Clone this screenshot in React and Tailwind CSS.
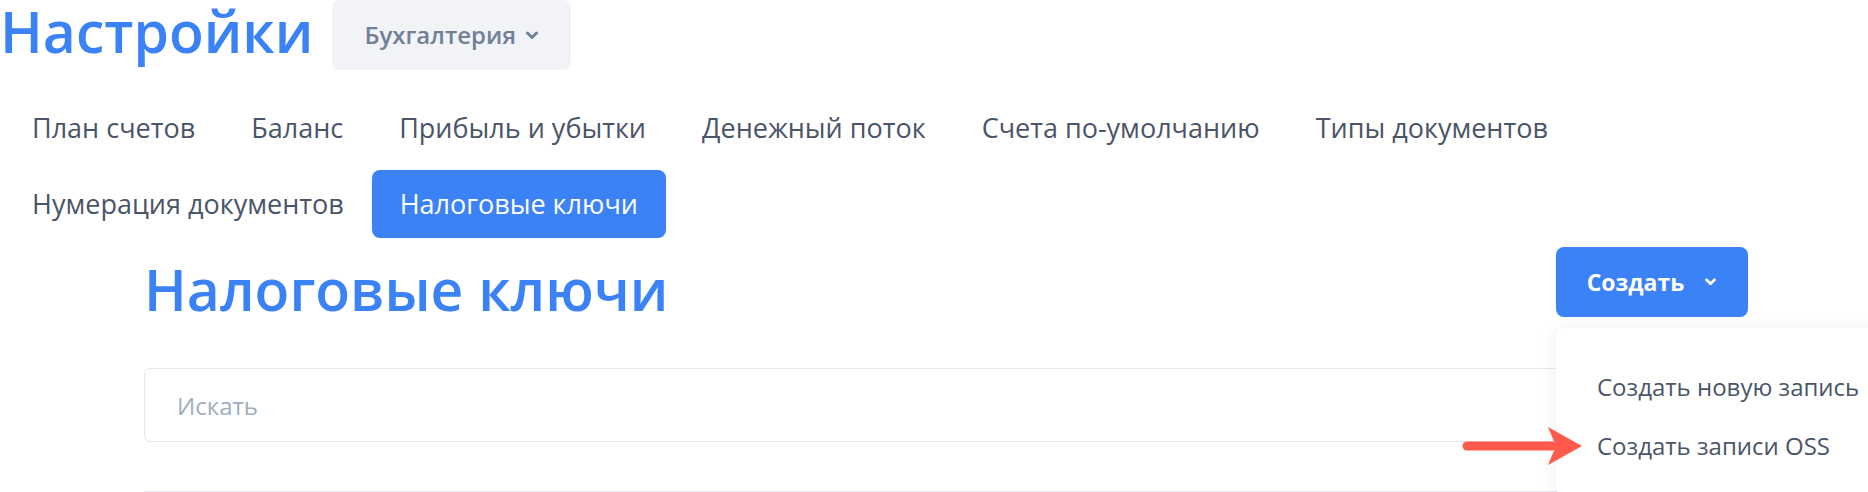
import React from "react";

const tabs = [
  "План счетов",
  "Баланс",
  "Прибыль и убытки",
  "Денежный поток",
  "Счета по-умолчанию",
  "Типы документов",
  "Нумерация документов",
  "Налоговые ключи",
];

const active = "Налоговые ключи";

function Chevron({ className }) {
  return (
    <svg
      viewBox="0 0 14 9"
      className={className}
      fill="none"
      stroke="currentColor"
      strokeWidth="3"
      strokeLinecap="round"
      strokeLinejoin="round"
    >
      <path d="M2.5 2l4.5 4.5 4.5-4.5" />
    </svg>
  );
}

export default function App() {
  return (
    <div className="relative h-[492px] w-full overflow-hidden bg-white font-['Open_Sans',sans-serif]">
      <div className="flex items-start">
        <h1 className="text-[57px] leading-[62px] font-semibold text-[#3b82f6]">Настройки</h1>
        <button className="ml-[19px] flex h-[70px] items-center gap-[9px] rounded-lg bg-[#f1f3f6] px-[32px] text-[24px] font-semibold text-[#718096]">
          Бухгалтерия
          <Chevron className="h-[9px] w-[14px]" />
        </button>
      </div>

      <nav className="mt-[24px] ml-[4px] flex max-w-[1620px] flex-wrap gap-y-[8px]">
        {tabs.map((t) => (
          <a
            key={t}
            className={
              t === active
                ? "flex h-[68px] items-center rounded-lg bg-[#3b82f6] px-[28px] text-[27px] text-white"
                : "flex h-[68px] items-center px-[28px] text-[27px] text-[#4a5568]"
            }
          >
            {t}
          </a>
        ))}
      </nav>

      <div className="ml-[144px] w-[1604px]">
        <div className="mt-[9px] flex h-[70px] items-start justify-between">
          <h2 className="mt-[11px] text-[57px] leading-[62px] font-semibold text-[#3b82f6]">
            Налоговые ключи
          </h2>
          <div className="relative">
            <button className="flex h-[70px] w-[192px] items-center justify-center gap-[20px] rounded-lg bg-[#3b82f6] text-[23px] font-bold text-white">
              Создать
              <Chevron className="h-[8px] w-[13px]" />
            </button>
            <div className="absolute left-0 top-full z-10 mt-[11px] w-[340px] rounded-lg bg-white pt-[29px] pb-[20px] shadow-[0_2px_18px_rgba(15,23,42,0.08)]">
              <div className="flex h-[59px] items-center pl-[41px] text-[24px] text-[#4a5568]">
                Создать новую запись
              </div>
              <div className="flex h-[59px] items-center pl-[41px] text-[24px] text-[#4a5568]">
                Создать записи OSS
              </div>
            </div>
          </div>
        </div>

        <input
          placeholder="Искать"
          className="mt-[51px] block h-[74px] w-full rounded-md border border-[#e2e8f0] pl-[32px] text-[24px] text-[#4a5568] outline-none placeholder:text-[#a0aec0]"
        />
        <div className="mt-[49px] border-t border-[#e2e8f0]" />
      </div>

      <svg
        className="absolute left-[1460px] top-[420px] z-20 h-[50px] w-[130px]"
        viewBox="0 0 130 50"
      >
        <line x1="7" y1="26" x2="92" y2="26" stroke="#ff5a4b" strokeWidth="9" strokeLinecap="round" />
        <polygon points="88,7 122,26 88,45 96,26" fill="#ff5a4b" />
      </svg>
    </div>
  );
}
